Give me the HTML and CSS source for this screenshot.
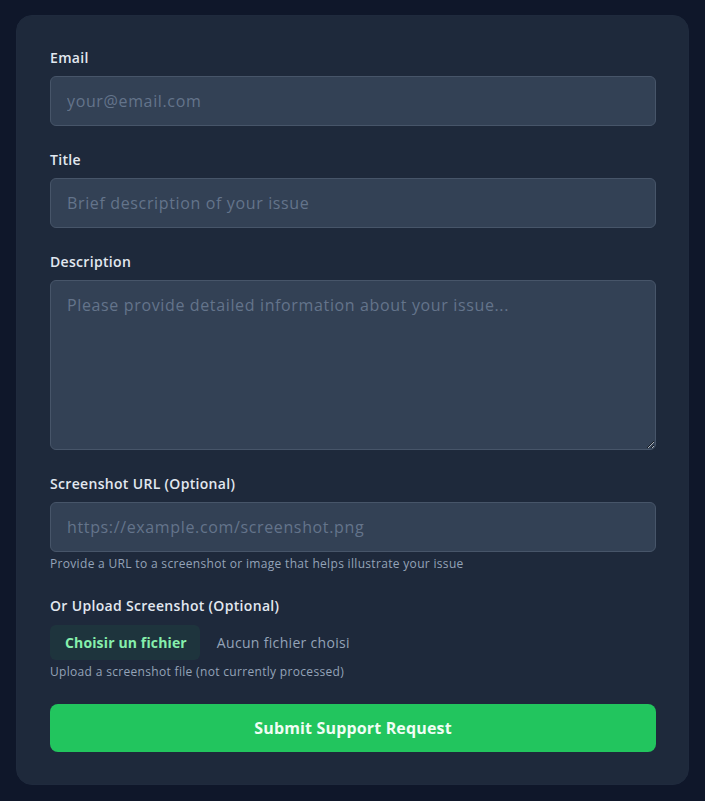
FILE: index.html
```html
<!DOCTYPE html>
<html lang="en">
<head>
    <meta charset="UTF-8">
    <meta name="viewport" content="width=device-width, initial-scale=1.0">
    <title>Support Request</title>
    <link rel="stylesheet" href="styles.css">
</head>
<body>
    <div class="support-card">
        <form class="support-form" onsubmit="return false;">
            <div class="form-group">
                <label for="email">Email</label>
                <input type="email" id="email" placeholder="your@email.com">
            </div>

            <div class="form-group">
                <label for="title">Title</label>
                <input type="text" id="title" placeholder="Brief description of your issue">
            </div>

            <div class="form-group">
                <label for="description">Description</label>
                <textarea id="description" placeholder="Please provide detailed information about your issue..."></textarea>
            </div>

            <div class="form-group">
                <label for="screenshotUrl">Screenshot URL (Optional)</label>
                <input type="url" id="screenshotUrl" placeholder="https://example.com/screenshot.png">
                <p class="help-text">Provide a URL to a screenshot or image that helps illustrate your issue</p>
            </div>

            <div class="form-group">
                <label>Or Upload Screenshot (Optional)</label>
                <div class="file-row">
                    <span class="file-button">Choisir un fichier</span>
                    <span class="file-name">Aucun fichier choisi</span>
                </div>
                <p class="help-text">Upload a screenshot file (not currently processed)</p>
            </div>

            <button type="submit" class="submit-button">Submit Support Request</button>
        </form>
    </div>
</body>
</html>
```

FILE: styles.css
```css
body {
    font-family: "Open Sans", Arial, sans-serif;
    margin: 0;
    padding: 15px 16px;
    background-color: #0f172a;
    letter-spacing: 0.02em;
}

.support-card {
    background-color: #1e293b;
    border: 1px solid #1f2a3d;
    border-radius: 16px;
    padding: 32px 32px 32px 33px;
}

.support-form {
    display: flex;
    flex-direction: column;
}

.form-group {
    display: flex;
    flex-direction: column;
    margin-bottom: 24px;
}

.form-group label {
    color: #e2e8f0;
    font-size: 14px;
    font-weight: 600;
    line-height: 20px;
    margin-bottom: 8px;
}

.form-group input,
.form-group textarea {
    font-family: inherit;
    font-size: 16px;
    letter-spacing: 0.04em;
    color: #e2e8f0;
    background-color: #334155;
    border: 1px solid #475569;
    border-radius: 6px;
    padding: 0 16px;
    height: 50px;
    box-sizing: border-box;
    outline: none;
}

.form-group textarea {
    height: 170px;
    padding: 12px 16px;
    line-height: 24px;
    resize: vertical;
}

.form-group input::placeholder,
.form-group textarea::placeholder {
    color: #64748b;
}

.help-text {
    margin: 4px 0 0 0;
    font-size: 12px;
    line-height: 16px;
    color: #94a3b8;
}

.file-row {
    display: flex;
    align-items: center;
    height: 35px;
    margin-top: 1px;
}

.file-button {
    display: flex;
    align-items: center;
    height: 35px;
    padding: 0 13px 0 15px;
    border-radius: 6px;
    background-color: rgba(34, 197, 94, 0.08);
    color: #86efac;
    font-size: 14px;
    font-weight: 700;
    letter-spacing: 0.01em;
}

.file-name {
    margin-left: 17px;
    color: #94a3b8;
    font-size: 14px;
}

.submit-button {
    font-family: inherit;
    font-size: 16px;
    font-weight: 700;
    letter-spacing: 0.01em;
    color: #f0fdf4;
    background-color: #22c55e;
    border: none;
    border-radius: 8px;
    height: 48px;
    cursor: pointer;
}
```
